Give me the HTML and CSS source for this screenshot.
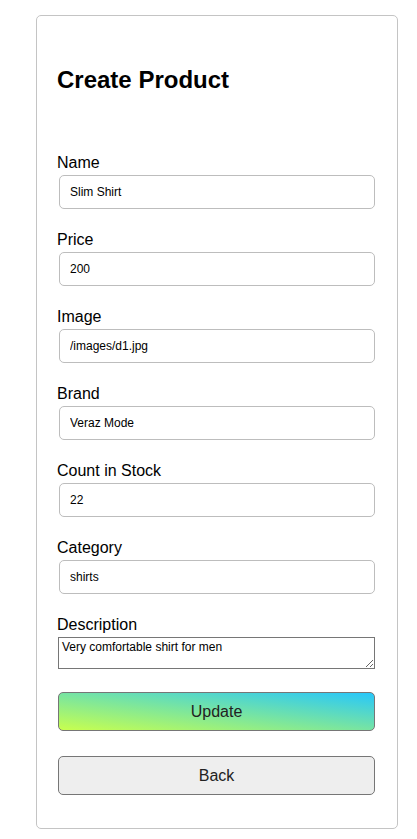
FILE: index.html
```html
<!DOCTYPE html>
<html lang="en">
<head>
<meta charset="utf-8">
<title>Create Product</title>
<link rel="stylesheet" href="styles.css">
</head>
<body>
<div class="page">
  <form class="card">
    <h1 class="title">Create Product</h1>
    <div class="field">
      <label class="label" for="name">Name</label>
      <input class="input" id="name" type="text" value="Slim Shirt">
    </div>
    <div class="field">
      <label class="label" for="price">Price</label>
      <input class="input" id="price" type="text" value="200">
    </div>
    <div class="field">
      <label class="label" for="image">Image</label>
      <input class="input" id="image" type="text" value="/images/d1.jpg">
    </div>
    <div class="field">
      <label class="label" for="brand">Brand</label>
      <input class="input" id="brand" type="text" value="Veraz Mode">
    </div>
    <div class="field">
      <label class="label" for="stock">Count in Stock</label>
      <input class="input" id="stock" type="text" value="22">
    </div>
    <div class="field">
      <label class="label" for="category">Category</label>
      <input class="input" id="category" type="text" value="shirts">
    </div>
    <div class="field field-last">
      <label class="label" for="desc">Description</label>
      <textarea class="textarea" id="desc">Very comfortable shirt for men</textarea>
    </div>
    <button class="btn btn-primary" type="button">Update</button>
    <button class="btn btn-back" type="button">Back</button>
  </form>
</div>
</body>
</html>
```

FILE: styles.css
```css
html, body {
  margin: 0;
  padding: 0;
  background: #fff;
}
body {
  font-family: "Liberation Sans", Arial, sans-serif;
  color: #000;
}
.page {
  padding: 15px 20px 10px 36px;
}
.card {
  display: flex;
  flex-direction: column;
  border: 1px solid #c4c4c4;
  border-radius: 5px;
  padding: 20px;
  box-sizing: border-box;
  width: 362px;
  height: 814px;
}
.title {
  font-size: 24px;
  font-weight: bold;
  line-height: 28px;
  margin: 30px 0 60px;
}
.field {
  display: flex;
  flex-direction: column;
  margin-bottom: 22px;
}
.label {
  font-size: 16px;
  line-height: 18px;
  margin-bottom: 3px;
}
.input {
  box-sizing: border-box;
  height: 34px;
  margin: 0 2px 0 2px;
  padding: 0 10px;
  border: 1px solid #bdbdbd;
  border-radius: 5px;
  font-family: "Liberation Sans", Arial, sans-serif;
  font-size: 12px;
  color: #000;
  background: #fff;
  outline: none;
}
.textarea {
  box-sizing: border-box;
  height: 32px;
  margin: 0 2px 0 1px;
  padding: 2px 3px;
  border: 1px solid #767676;
  font-family: "Liberation Sans", Arial, sans-serif;
  font-size: 12px;
  line-height: 14px;
  color: #000;
  resize: vertical;
}
.field-last {
  margin-bottom: 23px;
}
.btn {
  box-sizing: border-box;
  height: 39px;
  margin: 0 2px 0 1px;
  border: 1px solid #767676;
  border-radius: 5px;
  font-family: "Liberation Sans", Arial, sans-serif;
  font-size: 16px;
  color: #222;
  cursor: pointer;
}
.btn-primary {
  background: linear-gradient(to top right, #c8ff4e 0%, #7fe79a 45%, #27c7fb 100%);
  margin-bottom: 25px;
}
.btn-back {
  background: #eeeeee;
}
```
